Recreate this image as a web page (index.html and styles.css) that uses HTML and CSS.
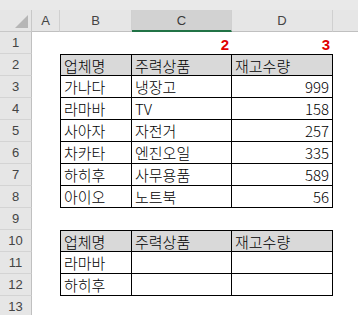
FILE: index.html
```html
<!DOCTYPE html>
<html lang="ko">
<head>
<meta charset="utf-8">
<link rel="stylesheet" href="styles.css">
</head>
<body>
<div class="sheet">
  <div class="strip"></div>

  <div class="corner"><span class="tri"></span></div>
  <div class="ch">A</div>
  <div class="ch">B</div>
  <div class="ch sel">C</div>
  <div class="ch">D</div>
  <div class="ch last"></div>

  <div class="rh">1</div><div></div><div></div><div class="mark">2</div><div class="mark">3</div><div></div>

  <div class="rh">2</div><div></div><div class="c hd l t">업체명</div><div class="c hd t">주력상품</div><div class="c hd t">재고수량</div><div></div>
  <div class="rh">3</div><div></div><div class="c l">가나다</div><div class="c">냉장고</div><div class="c n">999</div><div></div>
  <div class="rh">4</div><div></div><div class="c l">라마바</div><div class="c">TV</div><div class="c n">158</div><div></div>
  <div class="rh">5</div><div></div><div class="c l">사아자</div><div class="c">자전거</div><div class="c n">257</div><div></div>
  <div class="rh">6</div><div></div><div class="c l">차카타</div><div class="c">엔진오일</div><div class="c n">335</div><div></div>
  <div class="rh">7</div><div></div><div class="c l">하히후</div><div class="c">사무용품</div><div class="c n">589</div><div></div>
  <div class="rh">8</div><div></div><div class="c l">아이오</div><div class="c">노트북</div><div class="c n">56</div><div></div>
  <div class="rh">9</div><div></div><div></div><div></div><div></div><div></div>
  <div class="rh">10</div><div></div><div class="c hd l t">업체명</div><div class="c hd t">주력상품</div><div class="c hd t">재고수량</div><div></div>
  <div class="rh">11</div><div></div><div class="c l">라마바</div><div class="c"></div><div class="c"></div><div></div>
  <div class="rh">12</div><div></div><div class="c l">하히후</div><div class="c"></div><div class="c"></div><div></div>
  <div class="rh">13</div><div></div><div></div><div></div><div></div><div></div>
</div>
</body>
</html>
```

FILE: styles.css
```css
html, body {
  margin: 0;
  padding: 0;
  background: #ffffff;
}

.sheet {
  display: grid;
  grid-template-columns: 32px 28px 72px 100px 101px 25px;
  grid-template-rows: 10px 22px repeat(13, 22px);
  font-family: "Noto Sans CJK KR", "Noto Sans", sans-serif;
  width: 358px;
  height: 315px;
  overflow: hidden;
}

.strip {
  grid-column: 1 / -1;
  background: #e9e9e9;
}

.corner {
  background: #e6e6e6;
  border-right: 1px solid #c8c8c8;
  border-bottom: 1px solid #c8c8c8;
  box-sizing: border-box;
  display: flex;
  justify-content: flex-end;
  align-items: flex-end;
  padding: 0 3px 3px 0;
}

.tri {
  width: 0;
  height: 0;
  border-left: 13px solid transparent;
  border-bottom: 13px solid #b6b6b6;
}

.ch {
  background: #e6e6e6;
  border-right: 1px solid #d0d0d0;
  border-bottom: 1px solid #c0c0c0;
  box-sizing: border-box;
  display: flex;
  align-items: center;
  justify-content: center;
  font-family: "Liberation Sans", Arial, sans-serif;
  font-size: 13px;
  color: #444444;
}

.ch.sel {
  background: #d2d2d2;
  border-bottom: 2px solid #217346;
  color: #3a3a3a;
}

.ch.last {
  border-right: none;
}

.rh {
  background: #e6e6e6;
  border-right: 1px solid #c0c0c0;
  border-bottom: 1px solid #d4d4d4;
  box-sizing: border-box;
  display: flex;
  align-items: center;
  justify-content: center;
  font-family: "Liberation Sans", Arial, sans-serif;
  font-size: 13px;
  color: #444444;
}

.mark {
  display: flex;
  justify-content: flex-end;
  align-items: flex-end;
  padding: 0 3px 1px 0;
  font-family: "Liberation Sans", Arial, sans-serif;
  font-weight: bold;
  font-size: 15px;
  color: #e00000;
}

.c {
  box-sizing: border-box;
  border-right: 1px solid #000000;
  border-bottom: 1px solid #000000;
  display: flex;
  align-items: center;
  padding: 0 0 0 3px;
  font-size: 15px;
  font-weight: 300;
  color: #000000;
  white-space: nowrap;
}

.c.l {
  border-left: 1px solid #000000;
}

.c.t {
  border-top: 1px solid #000000;
}

.c.hd {
  background: #d9d9d9;
}

.c.n {
  justify-content: flex-end;
  padding: 0 3px 0 0;
}
```
